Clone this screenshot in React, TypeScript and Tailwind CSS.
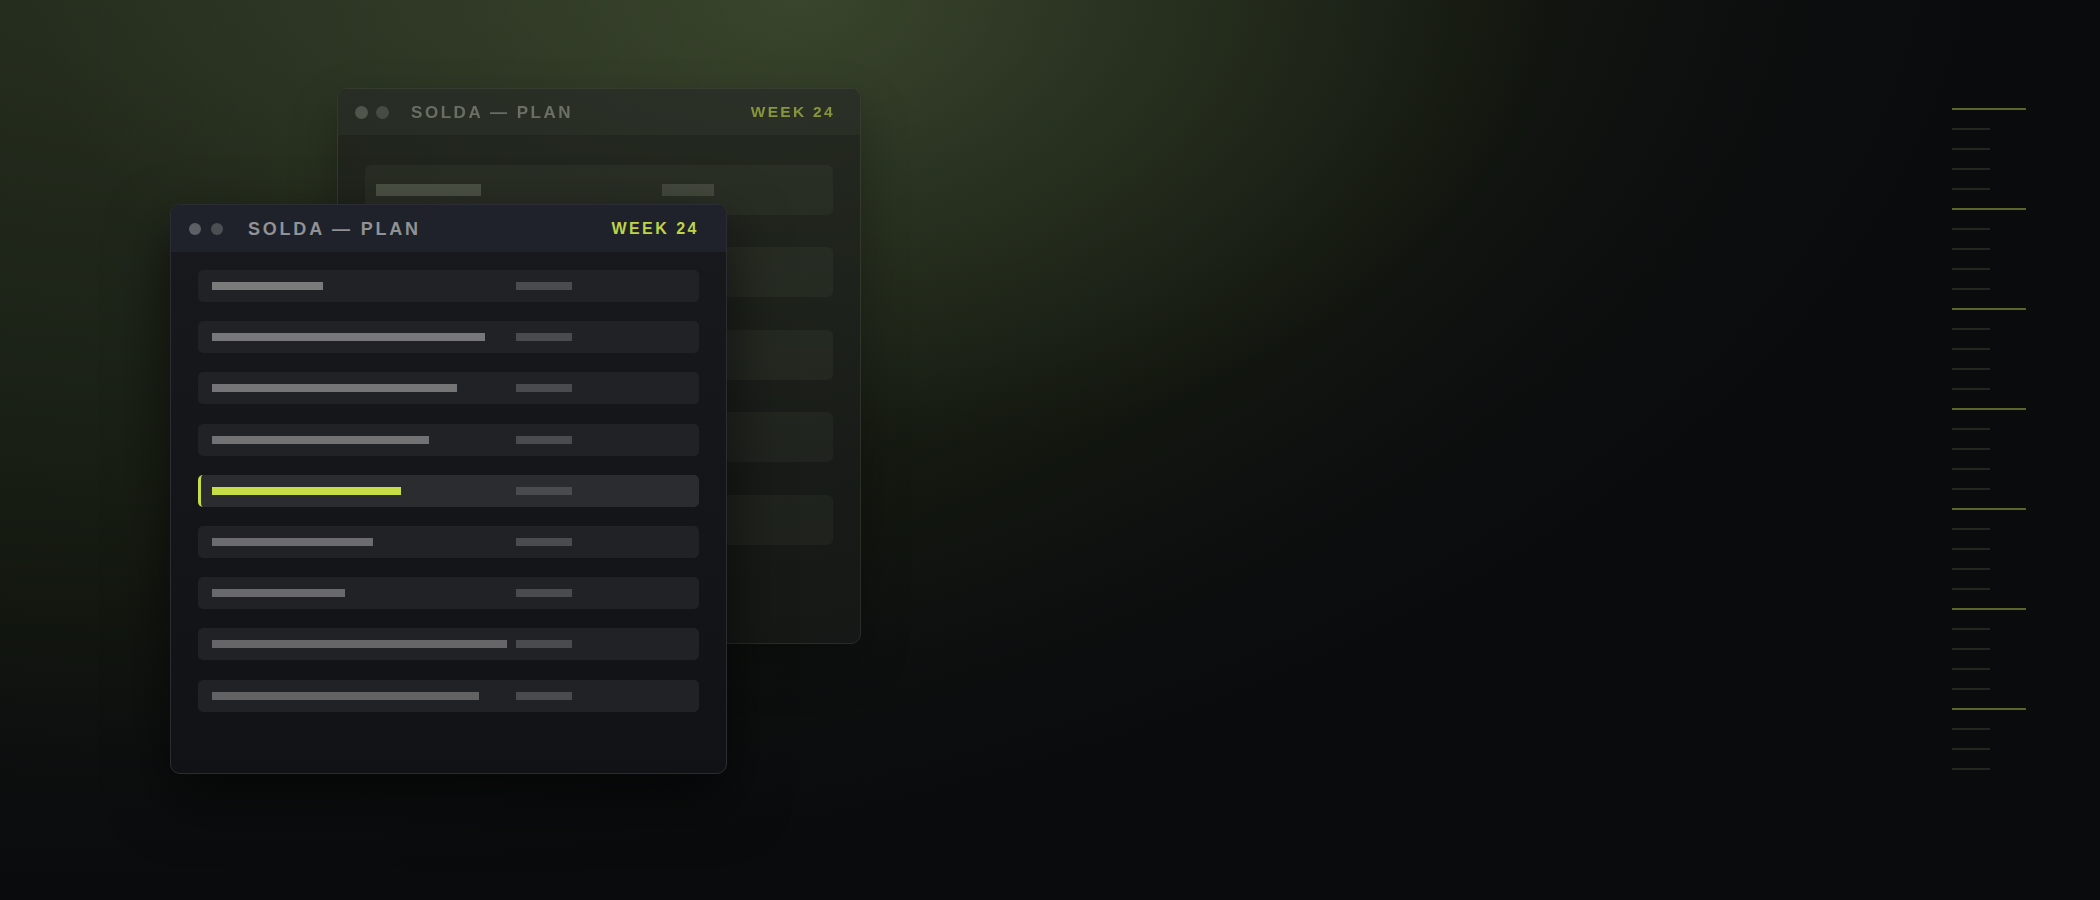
import React from "react";

const frontRows = [
  { w: 111, bar: "bg-[#7a7a7b]", active: false },
  { w: 273, bar: "bg-[#78787a]", active: false },
  { w: 245, bar: "bg-[#757577]", active: false },
  { w: 217, bar: "bg-[#727274]", active: false },
  { w: 189, bar: "bg-[#c6dd48]", active: true },
  { w: 161, bar: "bg-[#6c6c6e]", active: false },
  { w: 133, bar: "bg-[#69696b]", active: false },
  { w: 295, bar: "bg-[#666668]", active: false },
  { w: 267, bar: "bg-[#636365]", active: false },
];

const backRows = [105, 160, 130, 190, 120];

function FrontCard() {
  return (
    <div className="absolute left-[170px] top-[204px] flex h-[570px] w-[557px] flex-col overflow-hidden rounded-[10px] border border-[#2a2d33] bg-gradient-to-b from-[#17191d] to-[#101215] shadow-[0_24px_60px_rgba(0,0,0,0.6)]">
      <div className="flex h-[47px] shrink-0 items-center bg-[#1f222a] pl-[18px] pr-[27px]">
        <div className="flex gap-[10px]">
          <span className="h-[12px] w-[12px] rounded-full bg-[#5d6064]" />
          <span className="h-[12px] w-[12px] rounded-full bg-[#4b4e53]" />
        </div>
        <span className="ml-[25px] text-[18px] font-bold leading-none tracking-[0.155em] text-[#909295]">
          SOLDA — PLAN
        </span>
        <span className="ml-auto text-[16px] font-bold leading-none tracking-[0.155em] text-[#bdd348]">
          WEEK 24
        </span>
      </div>
      <div className="flex flex-col gap-[19.2px] px-[27px] pt-[18px]">
        {frontRows.map((r, i) => (
          <div
            key={i}
            className={
              r.active
                ? "flex h-8 items-center rounded-[5px] border-l-[3px] border-[#c6dd48] bg-[#2a2c30] pl-[11px]"
                : "flex h-8 items-center rounded-[5px] bg-[#202226] pl-[14px]"
            }
          >
            <div className="flex w-[303.5px] shrink-0 items-center">
              <div className={`h-2 ${r.bar}`} style={{ width: r.w }} />
            </div>
            <div className="h-2 w-[56px] bg-[#4a4b4f]" />
          </div>
        ))}
      </div>
    </div>
  );
}

function BackCard() {
  return (
    <div className="absolute left-[337px] top-[88px] flex h-[556px] w-[524px] flex-col overflow-hidden rounded-[10px] border border-[#3a3f38] bg-[#1b1d1c] opacity-60 blur-[0.5px] shadow-[0_20px_50px_rgba(0,0,0,0.45)]">
      <div className="flex h-[46px] shrink-0 items-center bg-[#262927] pl-[16.5px] pr-[25px]">
        <div className="flex gap-[8px]">
          <span className="h-[13px] w-[13px] rounded-full bg-[#6a6c6a]" />
          <span className="h-[13px] w-[13px] rounded-full bg-[#5a5c5a]" />
        </div>
        <span className="ml-[22.5px] text-[17px] font-bold leading-none tracking-[0.15em] text-[#939491]">
          SOLDA — PLAN
        </span>
        <span className="ml-auto text-[15.5px] font-bold leading-none tracking-[0.15em] text-[#bcd24a]">
          WEEK 24
        </span>
      </div>
      <div className="flex flex-col gap-[32.4px] px-[27px] pt-[30px]">
        {backRows.map((w, i) => (
          <div key={i} className="flex h-[50px] items-center rounded-[6px] bg-[#282b27] pl-[11px]">
            <div className="flex w-[286px] shrink-0 items-center">
              <div className="h-[12px] bg-[#62675c]" style={{ width: w }} />
            </div>
            <div className="h-[12px] w-[52px] bg-[#53564f]" />
          </div>
        ))}
      </div>
    </div>
  );
}

function Ruler() {
  const ticks = Array.from({ length: 34 }, (_, i) => i);
  return (
    <div className="mr-[74px] flex w-[74px] shrink-0 flex-col gap-[18px] pt-[108px]">
      {ticks.map((i) =>
        i % 5 === 0 ? (
          <div key={i} className="h-[2px] w-[74px] bg-[#59652b]" />
        ) : (
          <div key={i} className="h-[2px] w-[38px] bg-[#232720]" />
        )
      )}
    </div>
  );
}

export default function App() {
  return (
    <div className="relative flex h-[900px] w-[2100px] overflow-hidden bg-[#0a0b0d] bg-[radial-gradient(ellipse_760px_460px_at_800px_0px,rgba(74,88,56,0.62)_0%,rgba(74,88,56,0.3)_45%,rgba(74,88,56,0)_100%),radial-gradient(ellipse_2000px_1100px_at_200px_-100px,#283020_0%,#252d1e_15%,#181e14_52%,#12160f_66%,#0d0f0f_78%,#0a0b0d_90%,#0a0b0d_100%)] font-['Liberation_Sans',Arial,sans-serif]">
      <div className="relative flex-1">
        <BackCard />
        <FrontCard />
      </div>
      <Ruler />
    </div>
  );
}
